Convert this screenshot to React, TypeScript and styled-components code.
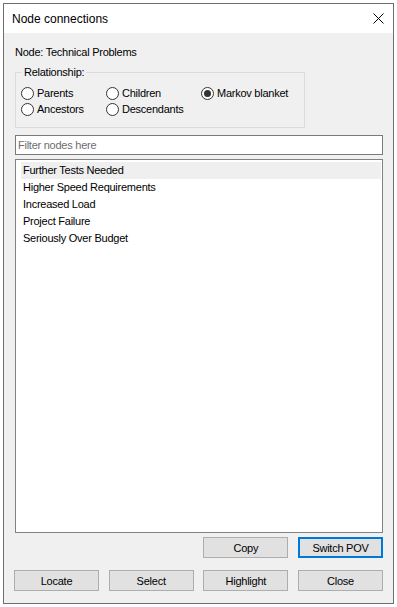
import styled, { createGlobalStyle } from "styled-components";

const GlobalStyle = createGlobalStyle`
  html, body {
    margin: 0;
    padding: 0;
    background: #ffffff;
  }
  body {
    font-family: "Liberation Sans", Arial, sans-serif;
    font-size: 11px;
    letter-spacing: -0.25px;
    color: #000000;
  }
  * {
    box-sizing: border-box;
  }
`

const Window = styled.div`
  margin: 3px 0 0 3px;
  width: 391px;
  height: 601px;
  border: 1px solid #6e6e6e;
  display: flex;
  flex-direction: column;
  background: #f0f0f0;
`

const TitleBar = styled.div`
  height: 29px;
  background: #ffffff;
  display: flex;
  align-items: center;
  justify-content: space-between;
  padding: 0 9px 0 8px;
  font-size: 12px;
  letter-spacing: 0;
`

const Body = styled.div`
  flex: 1;
  display: flex;
  flex-direction: column;
  padding: 13px 10px 12px 11px;
  min-height: 0;
`

const NodeLabel = styled.div`
  line-height: 13px;
  height: 13px;
`

const Group = styled.fieldset`
  margin: 7px 0 0 0;
  width: 290px;
  border: 1px solid #dcdcdc;
  padding: 6px 0 10px 5px;
  min-width: 0;
`

const Legend = styled.legend`
  margin-left: 1px;
  padding: 0 2px;
  line-height: 13px;
`

const RadioGrid = styled.div`
  display: grid;
  grid-template-columns: 85px 95px auto;
  grid-auto-rows: 16px;
`

const RadioItem = styled.label`
  display: flex;
  align-items: center;
  gap: 3px;
  white-space: nowrap;
`

const RadioCircle = styled.span<{ checked?: boolean }>`
  width: 13px;
  height: 13px;
  border-radius: 50%;
  border: 1px solid #333333;
  background: #ffffff;
  display: flex;
  align-items: center;
  justify-content: center;
  flex-shrink: 0;

  &::after {
    content: "";
    width: 7px;
    height: 7px;
    border-radius: 50%;
    background: ${(props) => (props.checked ? "#333333" : "transparent")};
  }
`

const FilterInput = styled.input`
  margin-top: 7px;
  height: 20px;
  width: 100%;
  border: 1px solid #7a7a7a;
  background: #ffffff;
  padding: 0 2px;
  font-family: "Liberation Sans", Arial, sans-serif;
  font-size: 11px;
  letter-spacing: -0.25px;
  outline: none;

  &::placeholder {
    color: #6d6d6d;
  }
`

const NodeList = styled.ul`
  list-style: none;
  margin: 4px 0 0 0;
  height: 374px;
  border: 1px solid #828282;
  background: #ffffff;
  padding: 2px 1px 0 5px;
`

const NodeItem = styled.li<{ selected?: boolean }>`
  height: 17px;
  line-height: 16px;
  padding-left: 2px;
  background: ${(props) => (props.selected ? "#efefef" : "transparent")};
`

const ButtonRow = styled.div<{ top: number }>`
  margin: ${(props) => props.top}px 0 0 -1px;
  display: grid;
  grid-template-columns: repeat(4, 85px);
  justify-content: space-between;
`

const Button = styled.button<{ primary?: boolean; col?: number }>`
  grid-column: ${(props) => props.col ?? "auto"};
  height: 21px;
  background: #e1e1e1;
  border: ${(props) => (props.primary ? "2px solid #0078d7" : "1px solid #adadad")};
  font-family: "Liberation Sans", Arial, sans-serif;
  font-size: 11px;
  letter-spacing: -0.25px;
  color: #000000;
  padding: 0;
`

const CloseIcon = () => (
  <svg width="11" height="11" viewBox="0 0 11 11">
    <path d="M0.5 0.5 L10.5 10.5 M10.5 0.5 L0.5 10.5" stroke="#000" strokeWidth="1" />
  </svg>
)

const nodes = [
  "Further Tests Needed",
  "Higher Speed Requirements",
  "Increased Load",
  "Project Failure",
  "Seriously Over Budget",
]

const App = () => {
  return (
    <>
      <GlobalStyle />
      <Window>
        <TitleBar>
          <span>Node connections</span>
          <CloseIcon />
        </TitleBar>
        <Body>
          <NodeLabel>Node: Technical Problems</NodeLabel>
          <Group>
            <Legend>Relationship:</Legend>
            <RadioGrid>
              <RadioItem><RadioCircle />Parents</RadioItem>
              <RadioItem><RadioCircle />Children</RadioItem>
              <RadioItem><RadioCircle checked />Markov blanket</RadioItem>
              <RadioItem><RadioCircle />Ancestors</RadioItem>
              <RadioItem><RadioCircle />Descendants</RadioItem>
            </RadioGrid>
          </Group>
          <FilterInput placeholder="Filter nodes here" />
          <NodeList>
            {nodes.map((n, i) => (
              <NodeItem key={n} selected={i === 0}>{n}</NodeItem>
            ))}
          </NodeList>
          <ButtonRow top={4}>
            <Button col={3}>Copy</Button>
            <Button primary>Switch POV</Button>
          </ButtonRow>
          <ButtonRow top={12}>
            <Button>Locate</Button>
            <Button>Select</Button>
            <Button>Highlight</Button>
            <Button>Close</Button>
          </ButtonRow>
        </Body>
      </Window>
    </>
  )
}

export default App;
